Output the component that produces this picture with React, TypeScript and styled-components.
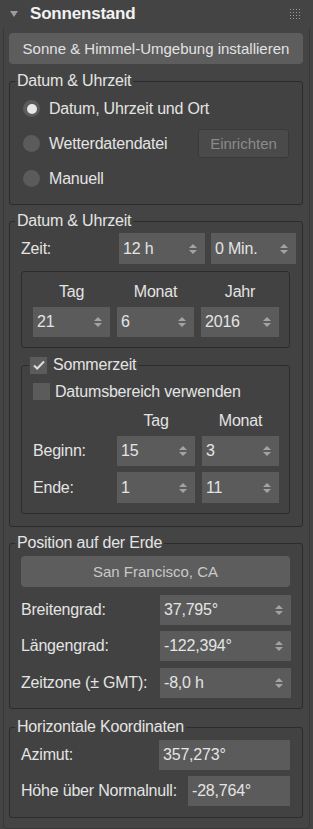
import { ReactNode } from "react";
import styled, { createGlobalStyle } from "styled-components";

const GlobalStyle = createGlobalStyle`
  html, body {
    margin: 0;
    padding: 0;
    background: #444444;
  }
  * {
    box-sizing: border-box;
  }
`;

const Root = styled.div`
  width: 313px;
  height: 829px;
  overflow: hidden;
  background: #444444;
  color: #e4e4e4;
  font-family: "Liberation Sans", Arial, sans-serif;
  font-size: 16px;
  letter-spacing: -0.2px;
`;

const Header = styled.div`
  height: 28px;
  display: flex;
  align-items: center;
  padding: 0 13px 0 10px;
`;

const Arrow = styled.span`
  width: 0;
  height: 0;
  border-left: 4px solid transparent;
  border-right: 4px solid transparent;
  border-top: 6px solid #9c9c9c;
  margin-right: 12px;
`;

const Title = styled.div`
  flex: 1;
  font-weight: 700;
  font-size: 17px;
  color: #f2f2f2;
`;

const Grip = styled.div`
  display: grid;
  grid-template-columns: repeat(4, 1px);
  gap: 2px;
  div {
    width: 1px;
    height: 1px;
    background: #9a9a9a;
  }
`;

const Body = styled.div`
  margin: 0 3px;
  padding: 5px 6px 5px 5px;
  border: 1px solid #383838;
  border-top: none;
  border-radius: 0 0 4px 4px;
  height: 801px;
`;

const WideButton = styled.div<{ $muted?: boolean }>`
  height: 31px;
  border-radius: 4px;
  background: #5d5d5d;
  display: flex;
  align-items: center;
  justify-content: center;
  color: ${(p) => (p.$muted ? "#c9c9c9" : "#e2e2e2")};
  font-size: 15px;
  letter-spacing: 0;
`;

const Group = styled.fieldset<{ $top: number; $bottom: number }>`
  margin: ${(p) => p.$top}px 0 0 0;
  padding: 0 12px ${(p) => p.$bottom}px 11px;
  border: 1px solid #2c2c2c;
  border-radius: 3px;
  background: #424242;
  min-width: 0;
`;

const Legend = styled.legend`
  margin-left: -6px;
  padding: 0 2px;
  height: 16px;
  line-height: 16px;
  display: flex;
  align-items: center;
  gap: 6px;
`;

const RadioRow = styled.div`
  height: 35px;
  display: flex;
  align-items: center;
  padding-left: 2px;
`;

const RadioDot = styled.span<{ $on?: boolean }>`
  width: 17px;
  height: 17px;
  border-radius: 50%;
  background: #5b5b5b;
  margin-right: 9px;
  display: flex;
  align-items: center;
  justify-content: center;
  &::after {
    content: "";
    width: 10px;
    height: 10px;
    border-radius: 50%;
    background: ${(p) => (p.$on ? "#e8e8e8" : "transparent")};
  }
`;

const RadioLabel = styled.span`
  flex: 1;
`;

const SmallButton = styled.div`
  width: 91px;
  height: 29px;
  border: 1px solid #3a3a3a;
  border-radius: 3px;
  background: #4a4a4a;
  color: #8a8a8a;
  font-size: 15px;
  letter-spacing: 0;
  display: flex;
  align-items: center;
  justify-content: center;
  margin-right: 1px;
`;

const TimeRow = styled.div`
  margin-top: 4px;
  display: grid;
  grid-template-columns: 92px 86px 85px;
  column-gap: 6px;
  align-items: center;
`;

const FieldLabel = styled.span`
  white-space: nowrap;
`;

const DateBox = styled.div`
  margin-top: 7px;
  border: 1px solid #2c2c2c;
  border-radius: 3px;
  padding: 11px 11px 10px 11px;
  display: grid;
  grid-template-columns: 77px 77px 78px;
  column-gap: 7px;
  row-gap: 6px;
`;

const ColHead = styled.div`
  text-align: center;
  height: 18px;
  line-height: 18px;
`;

const SpinBox = styled.div<{ $h?: number }>`
  height: ${(p) => p.$h ?? 30}px;
  background: #5b5b5b;
  display: flex;
  align-items: center;
  padding: 0 8px 0 4px;
`;

const SpinValue = styled.span`
  flex: 1;
  white-space: nowrap;
`;

const Arrows = styled.span`
  display: flex;
  flex-direction: column;
  gap: 2px;
  &::before,
  &::after {
    content: "";
    width: 0;
    height: 0;
    border-left: 4px solid transparent;
    border-right: 4px solid transparent;
  }
  &::before {
    border-bottom: 4px solid #a3a3a3;
  }
  &::after {
    border-top: 4px solid #a3a3a3;
  }
`;

const Check = styled.span`
  width: 17px;
  height: 17px;
  background: #5b5b5b;
  display: flex;
  align-items: center;
  justify-content: center;
  flex-shrink: 0;
`;

const DstGroup = styled.fieldset`
  margin: 9px 0 0 0;
  padding: 10px 12px 10px 11px;
  border: 1px solid #2c2c2c;
  border-radius: 3px;
  min-width: 0;
`;

const DstLegend = styled(Legend)`
  margin-left: -4px;
  padding: 0 2px 0 1px;
`;

const CheckRow = styled.div`
  display: flex;
  align-items: center;
  gap: 5px;
  height: 17px;
`;

const DstGrid = styled.div`
  margin-top: 12px;
  display: grid;
  grid-template-columns: 77px 78px 77px;
  column-gap: 7px;
  row-gap: 6px;
  align-items: center;
`;

const EarthButton = styled(WideButton)`
  margin-top: 5px;
`;

const ValueRow = styled.div<{ $gap: number }>`
  margin-top: ${(p) => p.$gap}px;
  display: grid;
  grid-template-columns: 139px 131px;
  align-items: center;
`;

const ReadRow = styled.div<{ $gap: number }>`
  margin-top: ${(p) => p.$gap}px;
  display: flex;
  align-items: center;
  justify-content: space-between;
`;

const ReadField = styled.div<{ $w: number }>`
  width: ${(p) => p.$w}px;
  height: 30px;
  background: #5b5b5b;
  display: flex;
  align-items: center;
  padding-left: 4px;
`;

function Spinner({ value, h }: { value: string; h?: number }) {
  return (
    <SpinBox $h={h}>
      <SpinValue>{value}</SpinValue>
      <Arrows />
    </SpinBox>
  );
}

function CheckMark() {
  return (
    <svg width="12" height="10" viewBox="0 0 12 10">
      <path d="M1 5.5 L4.2 8.5 L11 1.5" fill="none" stroke="#dcdcdc" strokeWidth="2" />
    </svg>
  );
}

function Radio({ on, children, extra }: { on?: boolean; children: ReactNode; extra?: ReactNode }) {
  return (
    <RadioRow>
      <RadioDot $on={on} />
      <RadioLabel>{children}</RadioLabel>
      {extra}
    </RadioRow>
  );
}

export default function App() {
  return (
    <Root>
      <GlobalStyle />
      <Header>
        <Arrow />
        <Title>Sonnenstand</Title>
        <Grip>
          {Array.from({ length: 16 }).map((_, i) => (
            <div key={i} />
          ))}
        </Grip>
      </Header>
      <Body>
        <WideButton>Sonne &amp; Himmel-Umgebung installieren</WideButton>

        <Group $top={9} $bottom={8}>
          <Legend>Datum &amp; Uhrzeit</Legend>
          <div style={{ height: 2 }} />
          <Radio on>Datum, Uhrzeit und Ort</Radio>
          <Radio extra={<SmallButton>Einrichten</SmallButton>}>Wetterdatendatei</Radio>
          <Radio>Manuell</Radio>
        </Group>

        <Group $top={8} $bottom={12}>
          <Legend>Datum &amp; Uhrzeit</Legend>
          <TimeRow>
            <FieldLabel>Zeit:</FieldLabel>
            <Spinner value="12 h" h={31} />
            <Spinner value="0 Min." h={31} />
          </TimeRow>
          <DateBox>
            <ColHead>Tag</ColHead>
            <ColHead>Monat</ColHead>
            <ColHead>Jahr</ColHead>
            <Spinner value="21" />
            <Spinner value="6" />
            <Spinner value="2016" />
          </DateBox>
          <DstGroup>
            <DstLegend>
              <Check>
                <CheckMark />
              </Check>
              Sommerzeit
            </DstLegend>
            <CheckRow>
              <Check />
              Datumsbereich verwenden
            </CheckRow>
            <DstGrid>
              <span />
              <ColHead>Tag</ColHead>
              <ColHead>Monat</ColHead>
              <FieldLabel>Beginn:</FieldLabel>
              <Spinner value="15" />
              <Spinner value="3" />
              <FieldLabel>Ende:</FieldLabel>
              <Spinner value="1" h={31} />
              <Spinner value="11" h={31} />
            </DstGrid>
          </DstGroup>
        </Group>

        <Group $top={8} $bottom={10}>
          <Legend>Position auf der Erde</Legend>
          <EarthButton $muted>San Francisco, CA</EarthButton>
          <ValueRow $gap={8}>
            <FieldLabel>Breitengrad:</FieldLabel>
            <Spinner value="37,795°" />
          </ValueRow>
          <ValueRow $gap={6}>
            <FieldLabel>Längengrad:</FieldLabel>
            <Spinner value="-122,394°" />
          </ValueRow>
          <ValueRow $gap={7}>
            <FieldLabel>Zeitzone (± GMT):</FieldLabel>
            <Spinner value="-8,0 h" />
          </ValueRow>
        </Group>

        <Group $top={10} $bottom={11}>
          <Legend>Horizontale Koordinaten</Legend>
          <ReadRow $gap={5}>
            <FieldLabel>Azimut:</FieldLabel>
            <ReadField $w={131}>357,273°</ReadField>
          </ReadRow>
          <ReadRow $gap={6}>
            <FieldLabel>Höhe über Normalnull:</FieldLabel>
            <ReadField $w={102}>-28,764°</ReadField>
          </ReadRow>
        </Group>
      </Body>
    </Root>
  );
}
